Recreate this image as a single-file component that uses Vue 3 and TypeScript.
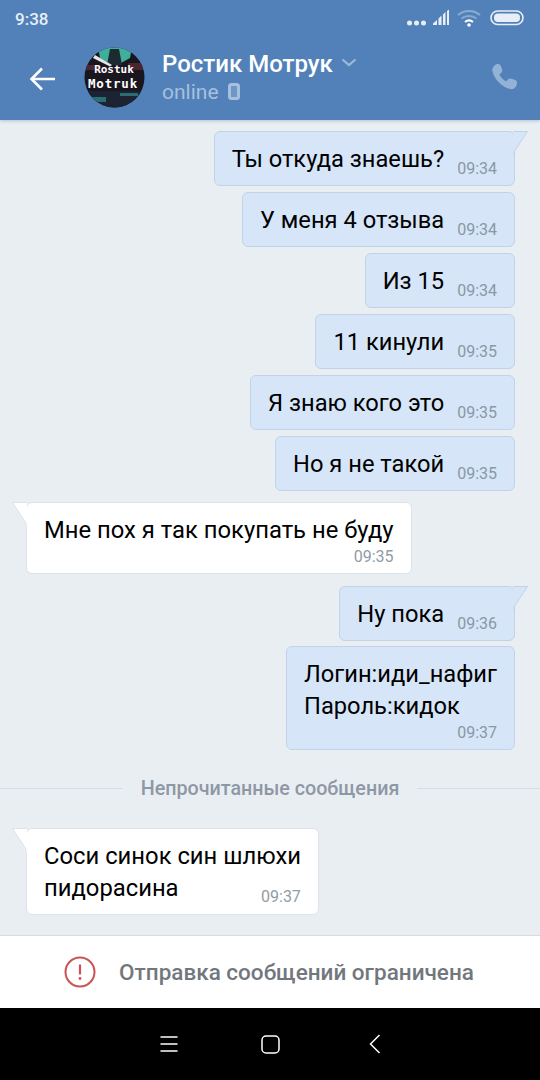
<script setup lang="ts">
interface Message {
  id: number
  lines: string[]
  time: string
  mine: boolean
  tail?: boolean
  stacked?: boolean
  gap: number
}

const messages: Message[] = [
  { id: 1, lines: ['Ты откуда знаешь?'], time: '09:34', mine: true, tail: true, gap: 0 },
  { id: 2, lines: ['У меня 4 отзыва'], time: '09:34', mine: true, gap: 6 },
  { id: 3, lines: ['Из 15'], time: '09:34', mine: true, gap: 6 },
  { id: 4, lines: ['11 кинули'], time: '09:35', mine: true, gap: 6 },
  { id: 5, lines: ['Я знаю кого это'], time: '09:35', mine: true, gap: 6 },
  { id: 6, lines: ['Но я не такой'], time: '09:35', mine: true, gap: 6 },
  { id: 7, lines: ['Мне пох я так покупать не буду'], time: '09:35', mine: false, tail: true, stacked: true, gap: 11 },
  { id: 8, lines: ['Ну пока'], time: '09:36', mine: true, tail: true, gap: 12 },
  { id: 9, lines: ['Логин:иди_нафиг', 'Пароль:кидок'], time: '09:37', mine: true, stacked: true, gap: 5 },
]

const unread: Message = {
  id: 10,
  lines: ['Соси синок син шлюхи', 'пидорасина'],
  time: '09:37',
  mine: false,
  tail: true,
  gap: 0,
}
</script>

<template>
  <div class="screen">
    <header class="header">
      <div class="status">
        <span class="status__clock">9:38</span>
        <svg width="120" height="22" viewBox="0 0 120 22">
          <circle cx="3.500" cy="15" r="2.500" fill="#e8eef6" />
          <circle cx="10.500" cy="15" r="2.500" fill="#e8eef6" />
          <circle cx="17.500" cy="15" r="2.500" fill="#e8eef6" />
          <path d="M27 17v-1.500l4-3.500v5zM32.500 17v-6.500l3-3V17zM37 17V6.500l2.500-2.500v13zM41 17V3l2-1.500V17z" fill="#e8eef6" />
          <path d="M52 7c6-5.500 16-5.500 22 0" fill="none" stroke="#8aabd3" stroke-width="2" />
          <path d="M55.500 10.500c4-3.500 11-3.500 15 0" fill="none" stroke="#8aabd3" stroke-width="2" />
          <path d="M59 14c2.500-2 5.500-2 8 0" fill="none" stroke="#fff" stroke-width="2" />
          <circle cx="63" cy="17" r="1.800" fill="#fff" />
          <rect x="85" y="3" width="32" height="13.500" rx="6.700" fill="none" stroke="#e8eef6" stroke-width="1.600" />
          <rect x="88" y="5.500" width="26" height="8.500" rx="4" fill="#e8eef6" />
        </svg>
      </div>
      <div class="bar">
        <svg class="bar__back" width="28" height="28" viewBox="0 0 28 28">
          <path d="M2.500 14H26M13 3.500 2.500 14 13 24.500" fill="none" stroke="#fff" stroke-width="2.600" />
        </svg>
        <svg class="avatar" width="61" height="61" viewBox="0 0 61 61">
          <defs>
            <clipPath id="avatar-clip"><circle cx="30.500" cy="30.500" r="30" /></clipPath>
          </defs>
          <g clip-path="url(#avatar-clip)">
            <rect width="61" height="61" fill="#1a1620" />
            <path d="M14 0h34l-2 11-9 5-4-11-5 0-4 11-8-5z" fill="#3fae9c" />
            <path d="M26 2h9l3 16H23z" fill="#1d2a30" />
            <path d="M11 8 28 18l-2 1.500L9 11z" fill="#e6e6e6" />
            <path d="M0 18h12l4 5H0zM44 16h17v7H47z" fill="#4a2630" />
            <path d="M0 44h61v17H0z" fill="#1c2434" />
            <path d="M36 46h18v3H36zM8 50h14v5H8z" fill="#2a6d72" />
            <text x="30" y="26" class="avatar__text">Rostuk</text>
            <text x="29" y="41" class="avatar__text avatar__text--big">Motruk</text>
          </g>
        </svg>
        <div class="peer">
          <div class="peer__name">
            Ростик Мотрук
            <svg width="16" height="9" viewBox="0 0 16 9">
              <path d="M1.500 1.500 8 7l6.500-5.500" fill="none" stroke="#9db9da" stroke-width="2.200" />
            </svg>
          </div>
          <div class="peer__online">
            online
            <svg width="12" height="17" viewBox="0 0 12 17">
              <rect x="1.500" y="1.500" width="9" height="14" rx="2" fill="#6f97c6" stroke="#a6c0de" stroke-width="3" />
            </svg>
          </div>
        </div>
        <svg class="bar__call" width="30" height="30" viewBox="0 0 28 28">
          <path d="M5.500 1.300c2-.9 4.100-.2 4.800 1.800l1 2.900c.4 1.300.1 2.400-.9 3.300l-1.100 1c-.4.400-.4.800-.2 1.200 1.400 2.400 3 4 5.300 5.300.5.200.9.200 1.300-.2l1-1.100c.9-1 2.100-1.300 3.300-.9l3 1c2 .7 2.800 2.900 1.900 4.800l-.6 1.200c-1 2-3.100 3.200-5.400 2.700C11 22.600 3.900 15.300 2.300 7.800 1.800 5.600 2.700 3.400 4.500 2z" fill="#94b2d6" />
        </svg>
      </div>
    </header>

    <main class="chat">
      <div
        v-for="m in messages"
        :key="m.id"
        class="msg"
        :class="{ 'msg--mine': m.mine }"
        :style="{ marginTop: m.gap + 'px' }"
      >
        <div class="bubble" :class="{ 'bubble--stacked': m.stacked }">
          <svg v-if="m.tail" class="bubble__tail" width="16" height="24" viewBox="0 0 16 24">
            <path d="M0 .500H14.500L1 21V24H0z" />
            <path d="M0 .500H14.500L1 21V24" class="bubble__tail-line" />
          </svg>
          <div class="bubble__text">
            <div v-for="line in m.lines" :key="line">{{ line }}</div>
          </div>
          <span class="bubble__time">{{ m.time }}</span>
        </div>
      </div>

      <div class="divider">
        <span>Непрочитанные сообщения</span>
      </div>

      <div class="msg">
        <div class="bubble bubble--wrapped">
          <svg class="bubble__tail" width="16" height="24" viewBox="0 0 16 24">
            <path d="M0 .500H14.500L1 21V24H0z" />
            <path d="M0 .500H14.500L1 21V24" class="bubble__tail-line" />
          </svg>
          <div class="bubble__text">
            <div v-for="line in unread.lines" :key="line">{{ line }}</div>
          </div>
          <span class="bubble__time">{{ unread.time }}</span>
        </div>
      </div>
    </main>

    <footer class="notice">
      <svg width="32" height="32" viewBox="0 0 32 32">
        <circle cx="16" cy="16" r="14.500" fill="none" stroke="#cc5155" stroke-width="2" />
        <path d="M16 8.500v10" stroke="#cc5155" stroke-width="2.200" />
        <circle cx="16" cy="22.500" r="1.400" fill="#cc5155" />
      </svg>
      <span>Отправка сообщений ограничена</span>
    </footer>

    <nav class="nav">
      <svg width="18" height="16" viewBox="0 0 18 16">
        <path d="M.500 1h17M.500 8h17M.500 15h17" stroke="#fff" stroke-width="1.500" />
      </svg>
      <svg width="19" height="19" viewBox="0 0 19 19">
        <rect x="1" y="1" width="17" height="17" rx="4" fill="none" stroke="#fff" stroke-width="1.500" />
      </svg>
      <svg class="nav__back" width="12" height="20" viewBox="0 0 12 20">
        <path d="M10.500 1 1.500 10l9 9" fill="none" stroke="#fff" stroke-width="1.500" />
      </svg>
    </nav>
  </div>
</template>

<style>
html,
body {
  margin: 0;
  background: #000;
}
</style>

<style scoped>
.screen {
  width: 540px;
  height: 1080px;
  display: flex;
  flex-direction: column;
  overflow: hidden;
  background: #e9eef3;
  font-family: Roboto, "Liberation Sans", sans-serif;
}

.header {
  height: 120px;
  flex: none;
  background: #5181b8;
  box-sizing: border-box;
  box-shadow: 0 1px 3px rgba(60, 90, 130, 0.3);
  position: relative;
}

.status {
  height: 38px;
  display: flex;
  justify-content: space-between;
  align-items: center;
  padding: 0 14px 0 15px;
}

.status__clock {
  color: #e8eef6;
  font-size: 17px;
  font-weight: 500;
  margin-bottom: 1px;
}

.bar {
  display: flex;
  align-items: center;
  padding-left: 29px;
  padding-top: 9px;
}

.bar__back {
  flex: none;
  margin-right: 27px;
  margin-top: 2px;
}

.avatar {
  flex: none;
  margin-right: 17px;
}

.avatar__text {
  fill: #fff;
  font-family: "DejaVu Sans Mono", monospace;
  font-weight: 700;
  font-size: 11px;
  text-anchor: middle;
}

.avatar__text--big {
  font-size: 12.500px;
  letter-spacing: 0.8px;
}

.peer {
  flex: 1;
  margin-top: -2px;
}

.peer__name {
  color: #fff;
  font-size: 24px;
  font-weight: 500;
  line-height: 30px;
  display: flex;
  align-items: center;
  gap: 8px;
}

.peer__name svg {
  margin-top: -3px;
}

.peer__online {
  color: #a6c0de;
  font-size: 21px;
  line-height: 26px;
  display: flex;
  align-items: center;
  gap: 9px;
}

.bar__call {
  flex: none;
  margin-right: 20px;
}

.chat {
  flex: 1;
  min-height: 0;
  padding: 11px 25px 0 26px;
  display: flex;
  flex-direction: column;
}

.msg {
  display: flex;
}

.msg--mine {
  justify-content: flex-end;
}

.bubble {
  position: relative;
  display: flex;
  align-items: flex-end;
  box-sizing: border-box;
  min-height: 55px;
  padding: 11px 17px 6px;
  background: #fff;
  border: 1px solid #dde3ea;
  border-radius: 6px;
}

.msg--mine .bubble {
  background: #d6e6f8;
  border-color: #c0d3e8;
}

.bubble--stacked {
  flex-direction: column;
  align-items: stretch;
}

.bubble__text {
  color: #000;
  font-size: 23.800px;
  line-height: 32px;
  white-space: nowrap;
  margin-right: 13px;
  align-self: flex-start;
}

.msg--mine .bubble__text {
  font-size: 23.700px;
}

.bubble--stacked .bubble__text {
  margin-right: 0;
}

.bubble--wrapped .bubble__text {
  margin: 0 0 4px;
}

.bubble__time {
  color: #929ba6;
  font-size: 16px;
  line-height: 20px;
  text-align: right;
  flex: none;
}

.msg--mine .bubble__time {
  color: #8a97a6;
}

.bubble--stacked .bubble__time {
  margin-top: 1px;
}

.bubble--wrapped .bubble__time {
  margin-left: -40px;
  margin-bottom: 1px;
}

.bubble__tail {
  position: absolute;
  top: -1px;
  left: -16px;
  transform: scaleX(-1);
  fill: #fff;
}

.msg--mine .bubble__tail {
  left: auto;
  right: -15px;
  transform: none;
  fill: #d6e6f8;
}

.bubble__tail-line {
  fill: none;
  stroke: #dde3ea;
}

.msg--mine .bubble__tail-line {
  stroke: #c0d3e8;
}

.divider {
  display: flex;
  align-items: center;
  justify-content: center;
  margin: 28px -25px 30px -26px;
  height: 20px;
  color: #8e98a4;
  font-size: 19.700px;
  font-weight: 500;
  gap: 18px;
}

.divider::before,
.divider::after {
  content: "";
  flex: 1;
  height: 1px;
  background: #d7dde4;
}

.notice {
  height: 73px;
  flex: none;
  box-sizing: border-box;
  border-top: 1px solid #d7dce2;
  background: #fff;
  display: flex;
  align-items: center;
  justify-content: center;
  gap: 23px;
  padding-right: 2px;
  color: #72777e;
  font-size: 22.500px;
  font-weight: 500;
}

.nav {
  height: 72px;
  flex: none;
  background: #000;
  display: flex;
  align-items: center;
  padding-left: 160px;
  gap: 83px;
}

.nav__back {
  margin-left: 6px;
}
</style>
